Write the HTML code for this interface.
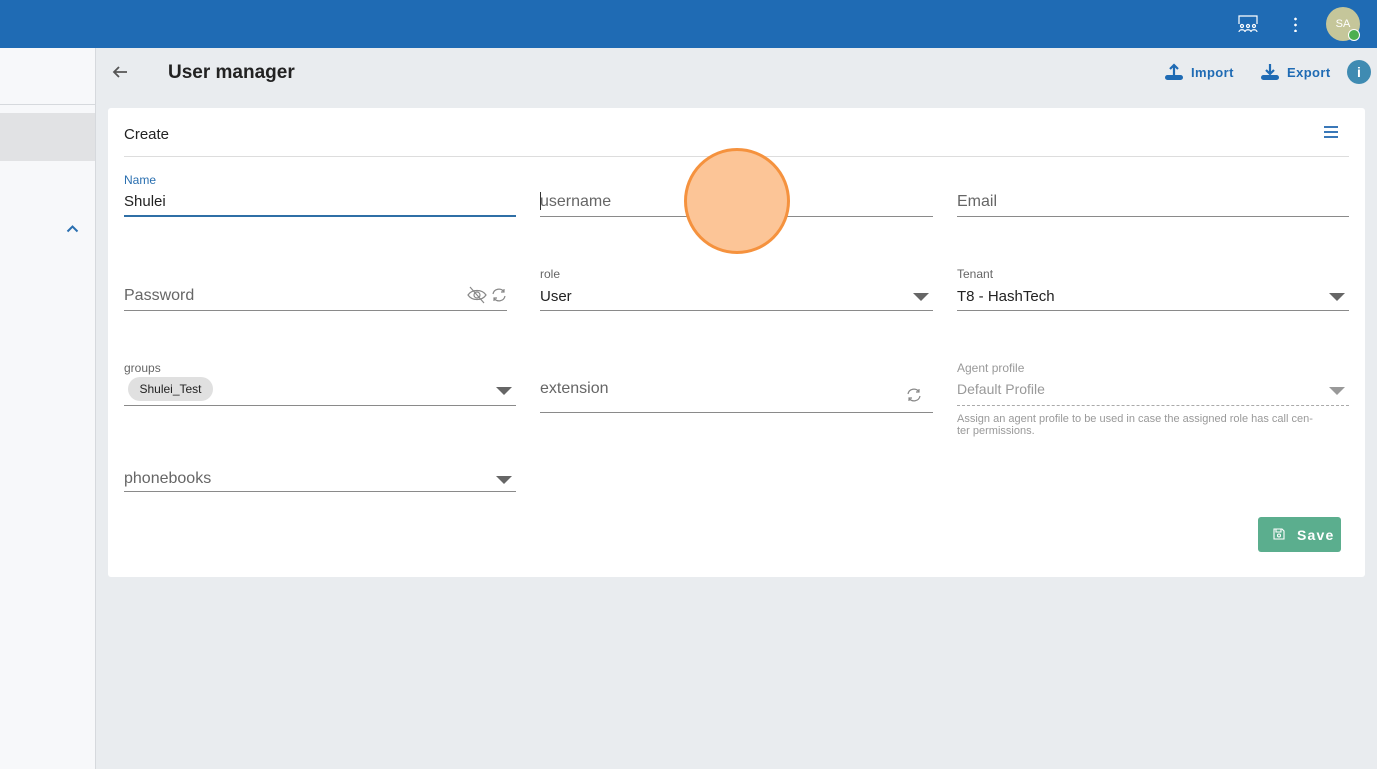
<!DOCTYPE html>
<html><head><meta charset="utf-8"><style>
*{box-sizing:border-box;margin:0;padding:0}
body{width:1377px;height:769px;overflow:hidden;font-family:"Liberation Sans",sans-serif;background:#e9ecef;position:relative;color:#222}
.a{position:absolute}
.top{left:0;top:0;width:1377px;height:48px;background:#1f6bb4}
.side{left:0;top:48px;width:96px;height:721px;background:#f7f8fa;border-right:1px solid #d6d9dd}
.card{left:108px;top:108px;width:1257px;height:469px;background:#fff;border-radius:3px}
.line{height:1px;background:#8a8a8a}
.lbl{font-size:12px;color:#666}
.val{font-size:15px;color:#222}
.ph{font-size:16px;color:#666}
.tri{width:0;height:0;border-left:8px solid transparent;border-right:8px solid transparent;border-top:8px solid #666}
</style></head><body>
<div class="a top"></div>
<svg class="a" style="left:1237px;top:14px" width="22" height="20" viewBox="0 0 22 20" fill="none" stroke="#fff" stroke-width="1.2"><path d="M2 10V2h18v8"/><circle cx="5" cy="12" r="1.5"/><circle cx="11" cy="12" r="1.5"/><circle cx="17" cy="12" r="1.5"/><path d="M2 18c0-3 6-3 6 0M8 18c0-3 6-3 6 0M14 18c0-3 6-3 6 0"/></svg>
<div class="a" style="left:1294px;top:16px;width:3px;height:16px;background:radial-gradient(circle,#fff 1.2px,transparent 1.5px) 0 0/3px 6px"></div>
<div class="a" style="left:1326px;top:7px;width:34px;height:34px;border-radius:50%;background:#c5c69a;color:#fff;font-size:11px;text-align:center;line-height:34px">SA</div>
<div class="a" style="left:1348px;top:29px;width:12px;height:12px;border-radius:50%;background:#4caf50;border:1.5px solid #fff"></div>
<div class="a side"></div>
<div class="a" style="left:0;top:104px;width:95px;height:1px;background:#d6d9dd"></div>
<div class="a" style="left:0;top:113px;width:95px;height:48px;background:#e1e2e4"></div>
<svg class="a" style="left:66px;top:224px" width="13" height="9" viewBox="0 0 13 9"><path d="M1.5 7.5l5-5 5 5" fill="none" stroke="#2a6fb0" stroke-width="2"/></svg>
<svg class="a" style="left:111px;top:64px" width="18" height="16" viewBox="0 0 18 16"><path d="M16 8H3M8 3L3 8l5 5" fill="none" stroke="#555" stroke-width="1.8"/></svg>
<div class="a" style="left:168px;top:62px;font-size:19px;font-weight:bold;color:#222">User manager</div>
<svg class="a" style="left:1164px;top:63px" width="20" height="18" viewBox="0 0 20 18"><path d="M10 12V2M6 6l4-4 4 4" fill="none" stroke="#1f6bb4" stroke-width="2.2"/><rect x="1" y="12" width="18" height="5" rx="2.5" fill="#1f6bb4"/></svg>
<div class="a" style="left:1191px;top:65px;font-size:13px;font-weight:bold;color:#1f6bb4;letter-spacing:.4px">Import</div>
<svg class="a" style="left:1260px;top:63px" width="20" height="18" viewBox="0 0 20 18"><path d="M10 1v10M6 7l4 4 4-4" fill="none" stroke="#1f6bb4" stroke-width="2.2"/><rect x="1" y="12" width="18" height="5" rx="2.5" fill="#1f6bb4"/></svg>
<div class="a" style="left:1287px;top:65px;font-size:13px;font-weight:bold;color:#1f6bb4;letter-spacing:.4px">Export</div>
<div class="a" style="left:1347px;top:60px;width:24px;height:24px;border-radius:50%;background:#3f8bb2;color:#fff;font-weight:bold;font-size:14px;text-align:center;line-height:24px">i</div>
<div class="a card"></div>
<div class="a" style="left:124px;top:126px;font-size:15px">Create</div>
<div class="a" style="left:1324px;top:126px;width:14px;height:12px;border-top:2px solid #3a78b8;border-bottom:2px solid #3a78b8"><div style="margin-top:3px;height:2px;background:#3a78b8"></div></div>
<div class="a" style="left:124px;top:156px;width:1225px;height:1px;background:#ddd"></div>
<div class="a lbl" style="left:124px;top:173px;color:#2a6fb0">Name</div>
<div class="a val" style="left:124px;top:193px">Shulei</div>
<div class="a" style="left:124px;top:215px;width:392px;height:2px;background:#2f6fa6"></div>
<div class="a ph" style="left:540px;top:193px">username</div>
<div class="a" style="left:540px;top:192px;width:1px;height:18px;background:#333"></div>
<div class="a line" style="left:540px;top:216px;width:393px"></div>
<div class="a ph" style="left:957px;top:193px">Email</div>
<div class="a line" style="left:957px;top:216px;width:392px"></div>
<div class="a ph" style="left:124px;top:287px">Password</div>
<svg class="a" style="left:467px;top:286px" width="20" height="18" viewBox="0 0 20 18" fill="none" stroke="#888" stroke-width="1.2"><path d="M1 9c4-6 14-6 18 0c-4 6-14 6-18 0z"/><circle cx="10" cy="9" r="3"/><path d="M3 1l14 16"/></svg>
<svg class="a" style="left:491px;top:287px" width="16" height="16" viewBox="0 0 16 16" fill="none" stroke="#888" stroke-width="1.2"><path d="M2 7a6 6 0 0 1 11-2M14 9a6 6 0 0 1-11 2M13 2v3h-3M3 14v-3h3"/></svg>
<div class="a line" style="left:124px;top:310px;width:383px"></div>
<div class="a lbl" style="left:540px;top:267px">role</div>
<div class="a val" style="left:540px;top:288px">User</div>
<div class="a tri" style="left:913px;top:293px"></div>
<div class="a line" style="left:540px;top:310px;width:393px"></div>
<div class="a lbl" style="left:957px;top:267px">Tenant</div>
<div class="a val" style="left:957px;top:288px">T8 - HashTech</div>
<div class="a tri" style="left:1329px;top:293px"></div>
<div class="a line" style="left:957px;top:310px;width:392px"></div>
<div class="a lbl" style="left:124px;top:361px">groups</div>
<div class="a" style="left:128px;top:377px;width:85px;height:24px;border-radius:12px;background:#e0e0e0;font-size:12px;text-align:center;line-height:24px;color:#222">Shulei_Test</div>
<div class="a tri" style="left:496px;top:387px"></div>
<div class="a line" style="left:124px;top:405px;width:392px"></div>
<div class="a ph" style="left:540px;top:380px">extension</div>
<svg class="a" style="left:906px;top:387px" width="16" height="16" viewBox="0 0 16 16" fill="none" stroke="#888" stroke-width="1.2"><path d="M2 7a6 6 0 0 1 11-2M14 9a6 6 0 0 1-11 2M13 2v3h-3M3 14v-3h3"/></svg>
<div class="a line" style="left:540px;top:412px;width:393px"></div>
<div class="a lbl" style="left:957px;top:361px;color:#999">Agent profile</div>
<div class="a" style="left:957px;top:381px;font-size:14px;color:#999">Default Profile</div>
<div class="a tri" style="left:1329px;top:387px;border-top-color:#999"></div>
<div class="a" style="left:957px;top:405px;width:392px;border-top:1px dashed #aaa"></div>
<div class="a" style="left:957px;top:413px;width:392px;font-size:11px;line-height:12px;color:#999">Assign an agent profile to be used in case the assigned role has call cen-<br>ter permissions.</div>
<div class="a ph" style="left:124px;top:470px">phonebooks</div>
<div class="a tri" style="left:496px;top:476px"></div>
<div class="a line" style="left:124px;top:491px;width:392px"></div>
<div class="a" style="left:1258px;top:517px;width:83px;height:35px;border-radius:3px;background:#5bae8e"></div>
<svg class="a" style="left:1273px;top:528px" width="12" height="12" viewBox="0 0 12 12" fill="none" stroke="#fff" stroke-width="1.1"><path d="M1 1h8l2 2v8H1z"/><circle cx="6" cy="7.5" r="1.5"/><path d="M3 1v3h5V1"/></svg>
<div class="a" style="left:1297px;top:527px;font-size:14px;font-weight:bold;color:#fff;letter-spacing:1.2px">Save</div>
<div class="a" style="left:684px;top:148px;width:106px;height:106px;border-radius:50%;background:#fcc597;border:3px solid #f5923e"></div>
</body></html>
